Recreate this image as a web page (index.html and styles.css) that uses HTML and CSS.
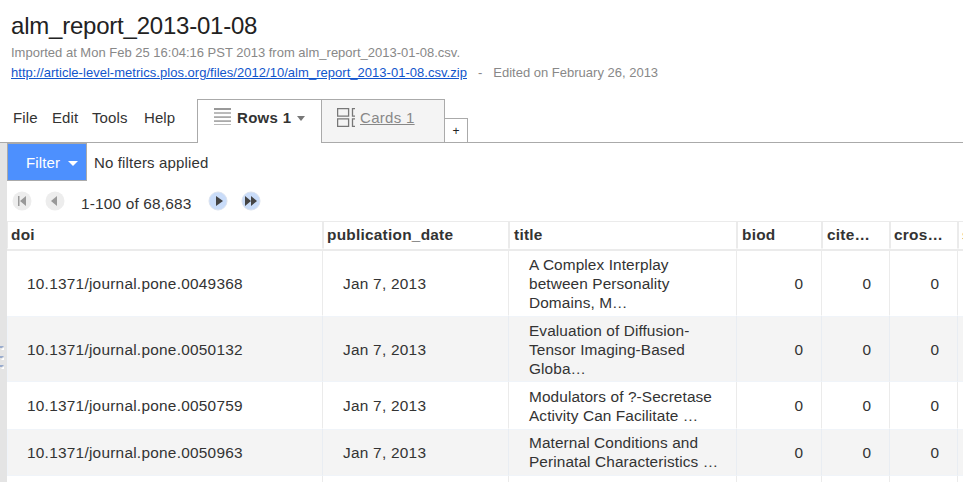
FILE: index.html
```html
<!DOCTYPE html>
<html lang="en">
<head>
<meta charset="utf-8">
<title>alm_report_2013-01-08</title>
<link rel="stylesheet" href="styles.css">
</head>
<body>
<header class="doc-header">
  <h1><span>alm_report_2013-01-08</span></h1>
  <p class="meta imported"><span>Imported at Mon Feb 25 16:04:16 PST 2013 from alm_report_2013-01-08.csv.</span></p>
  <p class="meta source"><a href="#">http://article-level-metrics.plos.org/files/2012/10/alm_report_2013-01-08.csv.zip</a><span class="dash">-</span><span>Edited on February 26, 2013</span></p>
</header>
<nav class="tabbar">
  <div class="menus"><span class="m-file">File</span><span class="m-edit">Edit</span><span class="m-tools">Tools</span><span>Help</span></div>
  <div class="tab active">
    <svg width="17" height="18" viewBox="0 0 17 18"><path fill="#999" d="M0 0h17v2H0z"/><path fill="#bbb" d="M0 4h17v2H0zM0 8h17v1H0zM0 12h17v1H0zM0 16h17v1H0z"/><path fill="#aaa" d="M0 9h17v1H0zM0 13h17v1H0z"/></svg>
    <b>Rows 1</b>
    <svg class="caret" width="8" height="5" viewBox="0 0 8 5"><path fill="#777" d="M0 0h8L4 5z"/></svg>
  </div>
  <div class="tab cards">
    <svg width="18" height="19" viewBox="0 0 18 19"><path fill="none" stroke="#777" stroke-width="1.300" d="M.6.6h11v7.500H.6zM.6 10.900h11v7.500H.6zM18 .6h-2.500v7.500H18M18 10.900h-2.500v7.500H18"/></svg>
    <span class="label">Cards 1</span>
  </div>
  <div class="add">+</div>
  <div class="rest"></div>
</nav>
<div class="workspace">
  <aside class="splitter">
    <svg width="5" height="28" viewBox="0 0 5 28"><g fill="#9aaccd"><path d="M0 2h4L2 4H0zM0 12h4l-2 2H0zM0 21h4l-2 2H0z"/></g><g fill="#fff"><path d="M3 4h1v2H1zM3 14h1v2H1zM3 23h1v2H1z"/></g></svg>
  </aside>
  <main>
    <div class="filters"><button class="filter"><span>Filter</span><svg width="10" height="5" viewBox="0 0 10 5"><path fill="#fff" d="M0 0h10L5 5z"/></svg></button><span class="nofilter">No filters applied</span></div>
    <div class="pager">
      <svg class="pg" width="20" height="20" viewBox="0 0 20 20"><circle cx="10" cy="10" r="9.500" fill="#ededed"/><path fill="#999" d="M6 5h1.500v10H6zM14 5v10L8 10z"/></svg>
      <svg class="pg" width="20" height="20" viewBox="0 0 20 20"><circle cx="10" cy="10" r="9.500" fill="#ededed"/><path fill="#999" d="M12 5v10L6 10z"/></svg>
      <span class="range">1-100 of 68,683</span>
      <svg class="pg next" width="20" height="20" viewBox="0 0 20 20"><circle cx="10" cy="10" r="9" fill="#c9dcf9" stroke="#dbe3f0"/><path fill="#444" d="M8 5v10l7-5z"/></svg>
      <svg class="pg" width="20" height="20" viewBox="0 0 20 20"><circle cx="10" cy="10" r="9" fill="#c9dcf9" stroke="#dbe3f0"/><path fill="#444" d="M4 5v10l6-5zM10 5v10l6-5z"/></svg>
    </div>
    <div class="grid">
      <div class="row head"><div>doi</div><div>publication_date</div><div class="inset">title</div><div class="inset">biod</div><div class="inset">cite…</div><div>cros…</div><div>s</div></div>
      <div class="row first"><div>10.1371/journal.pone.0049368</div><div>Jan 7, 2013</div><div class="t">A Complex Interplay<br>between Personality<br>Domains, M…</div><div class="n">0</div><div class="n">0</div><div class="n">0</div><div></div></div>
      <div class="row alt tall"><div>10.1371/journal.pone.0050132</div><div>Jan 7, 2013</div><div class="t">Evaluation of Diffusion-<br>Tensor Imaging-Based<br>Globa…</div><div class="n">0</div><div class="n">0</div><div class="n">0</div><div></div></div>
      <div class="row"><div>10.1371/journal.pone.0050759</div><div>Jan 7, 2013</div><div class="t low">Modulators of ?-Secretase<br>Activity Can Facilitate …</div><div class="n">0</div><div class="n">0</div><div class="n">0</div><div></div></div>
      <div class="row alt"><div>10.1371/journal.pone.0050963</div><div>Jan 7, 2013</div><div class="t">Maternal Conditions and<br>Perinatal Characteristics …</div><div class="n">0</div><div class="n">0</div><div class="n">0</div><div></div></div>
      <div class="row last"><div></div><div></div><div></div><div></div><div></div><div></div><div></div></div>
    </div>
  </main>
</div>
</body>
</html>
```

FILE: styles.css
```css
* { box-sizing: border-box; }
body {
  margin: 0;
  width: 963px;
  height: 482px;
  overflow: hidden;
  display: flex;
  flex-direction: column;
  background: #fff;
  color: #333;
  font: 15px/19px "Liberation Sans", Arial, sans-serif;
}
svg { display: block; flex: none; }
.doc-header { height: 99px; padding: 11px 0 0 11px; flex: none; }
h1 { margin: 0; font-size: 24px; line-height: 30px; font-weight: 400; color: #222; white-space: nowrap; letter-spacing: -.22px; }
.meta { margin: 0; font-size: 13px; line-height: 20px; color: #888; white-space: nowrap; }
.imported { margin-top: 2px; }
.meta a { color: #15c; letter-spacing: .03px; }
.dash { margin: 0 11px; }

.tabbar { display: flex; height: 44px; flex: none; align-items: stretch; }
.menus { display: flex; width: 197px; padding: 9px 0 0 13px; border-bottom: 1px solid #aaa; letter-spacing: .1px; }
.m-file { width: 39px; }
.m-edit { width: 40px; }
.m-tools { width: 52px; }
.tab { display: flex; border: 1px solid #aaa; line-height: 19px; letter-spacing: .3px; }
.active { width: 124px; border-right: 0; border-bottom: 0; padding: 8px 0 0 16px; }
.active b { margin-left: 6px; }
.caret { margin: 8px 0 0 6px; }
.cards { width: 124px; background: #f4f4f4; padding: 8px 0 0 15px; color: #888; }
.label { margin-left: 5px; text-decoration: underline; }
.add { width: 23px; height: 25px; margin-top: 19px; border: 1px solid #aaa; border-left: 0; font-size: 12px; line-height: 24px; text-align: center; color: #222; }
.rest { flex: 1; border-bottom: 1px solid #aaa; }

.workspace { display: flex; flex: 1; min-height: 0; }
.splitter { width: 7px; background: #e4e4e4; padding-top: 201px; flex: none; }
main { flex: 1; min-width: 0; overflow: hidden; }
.filters { display: flex; height: 38px; }
.filter { display: flex; align-items: center; width: 80px; border: 1px solid #aaa; background: #4d90fe; color: #fff; font: inherit; letter-spacing: .15px; padding: 0 0 0 18px; }
.filter svg { margin: 2px 0 0 8px; }
.nofilter { margin-left: 7px; line-height: 39px; letter-spacing: .15px; }
.pager { display: flex; height: 40px; padding: 10px 0 0 5px; }
.pg { margin-right: 13px; }
.range { width: 113px; margin-left: 3px; font-size: 15.4px; line-height: 25px; white-space: nowrap; letter-spacing: .17px; }
.next { margin-left: 14px; }

.row { display: grid; grid-template-columns: 316px 186px 228px 85px 68px 68px 68px; height: 47px; width: 1019px; font-size: 15.4px; }
.row > div { display: flex; align-items: center; padding: 0 20px; border-right: 1px solid #ebebeb; white-space: nowrap; border-bottom: 1px solid transparent; letter-spacing: .25px; }
.row > .t { letter-spacing: .1px; }
.row > .n { justify-content: flex-end; padding-right: 18px; letter-spacing: 0; }
.first { height: 65px; }
.tall { height: 66px; }
.tall > div { padding-top: 2px; }
.row > .low { padding-top: 2px; }
.alt { background: #f4f4f4; box-shadow: inset 0 0 0 1px #f0f4f9; }
.alt > div { border-right-color: #e9edf2; }
.head { height: 30px; border-top: 1px solid #ebebeb; border-bottom: 2px solid #ebebeb; font-weight: 700; }
.row.head > div { padding: 0 3px 1px; border-left: 1px solid #ebebeb; }
.row.head > .inset { padding-left: 4px; }
```
